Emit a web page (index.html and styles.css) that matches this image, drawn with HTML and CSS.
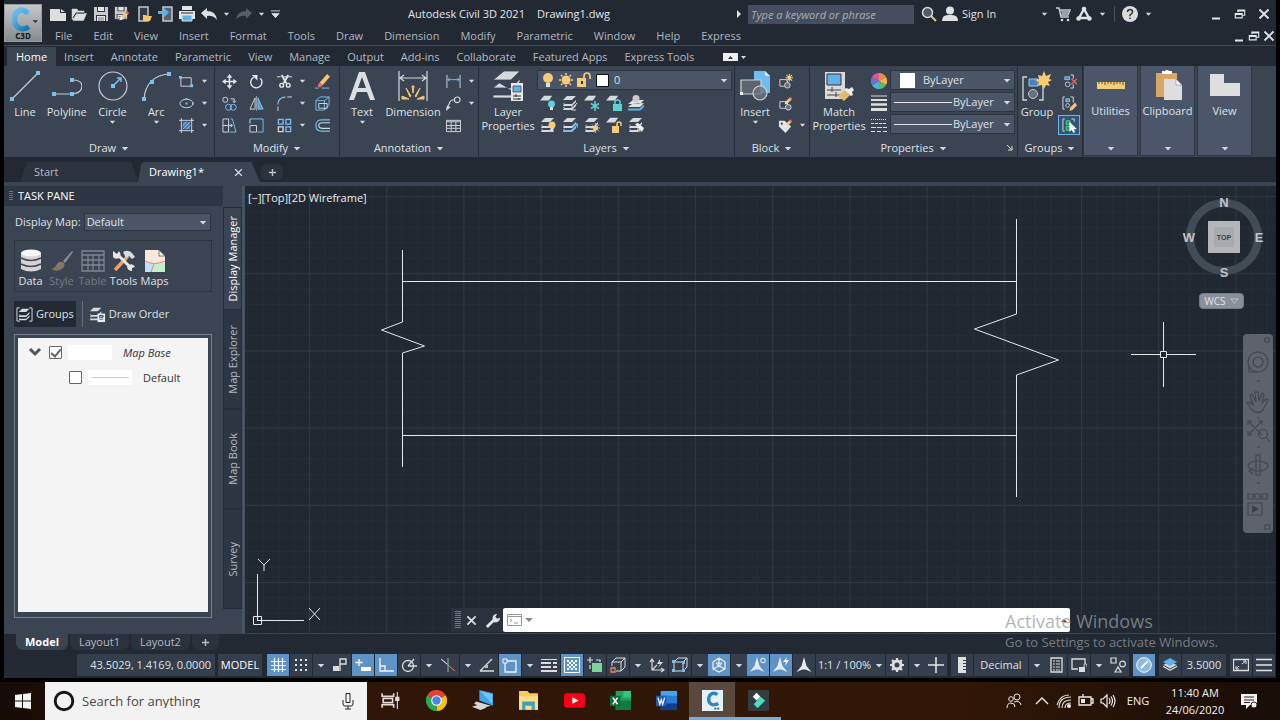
FILE: index.html
```html
<!DOCTYPE html>
<html lang="en">
<head>
<meta charset="utf-8">
<title>Autodesk Civil 3D 2021 - Drawing1.dwg</title>
<link rel="stylesheet" href="styles.css">
</head>
<body>
<svg class="defs" aria-hidden="true">
<defs>
<linearGradient id="gC" x1="0" y1="0" x2="1" y2="1"><stop offset="0" stop-color="#6cc3f0"/><stop offset="1" stop-color="#1271ad"/></linearGradient>
<symbol id="dn" viewBox="0 0 10 6"><path d="M1 1h8L5 5.500z" fill="#d5dae2"/></symbol>
<symbol id="sheets" viewBox="0 0 16 16"><path d="M5 1h9l-4 4H1zM3 7l-2 2h9l4-4v2l-4 4H1M3 11l-2 2h9l4-4v2l-4 4H1" fill="#d6d9dd"/></symbol>
<symbol id="sheet" viewBox="0 0 16 16"><path d="M5 2h10l-4 6H0z" fill="#d6d9dd"/></symbol>
<symbol id="new" viewBox="0 0 16 16"><path d="M0 3h10v4h6v8H0z" fill="#dedede"/><path d="M11 3l4 3h-4z" fill="#dedede"/></symbol>
<symbol id="open" viewBox="0 0 16 16"><path d="M1 13V3h5l1 2h6v2H5L2 14M5.500 7.500h10l-3 7H2z" fill="#dedede" stroke="#dedede" stroke-width=".5"/><path d="M2 12l3-5h8" fill="none" stroke="#222933"/></symbol>
<symbol id="save" viewBox="0 0 16 16"><path d="M1 1h14v14H1z" fill="#c9cbce"/><path d="M4 1h8v5H4zM3 9h10v6H3z" fill="#303641"/><path d="M5 1h6v4H5zM4 10h8v5H4z" fill="#e6e6e6"/><path d="M5 12h6M5 14h6" stroke="#777"/></symbol>
<symbol id="pencil" viewBox="0 0 16 16"><path d="M4 13l1-4 6-6 3 3-6 6z" fill="#f1cb7c"/><path d="M10 4l2-2 3 3-2 2z" fill="#df6660"/><path d="M3 14l2-5 3 3z" fill="#eee"/></symbol>
<symbol id="phone" viewBox="0 0 16 16"><rect x="3" y="1" width="9" height="14" fill="#353c48" stroke="#c5c8cc" stroke-width="1.500"/><path d="M7 9h3l1 1h5l-2 5H7z" fill="#f1c574"/></symbol>
<symbol id="phone2" viewBox="0 0 16 16"><rect x="5" y="1" width="9" height="14" fill="#59616e" stroke="#c5c8cc" stroke-width="1.500"/><path d="M0 5h6V2l5 4.500L6 11V8H0z" fill="#5eb0e8"/></symbol>
<symbol id="print" viewBox="0 0 16 16"><path d="M3 0h10v4H3zM0 5h16v8H0z" fill="#e4e4e4"/><path d="M3 9h10v6H3z" fill="#5eb0e8" stroke="#e4e4e4"/><path d="M2 7h12" stroke="#222933"/></symbol>
<symbol id="undo" viewBox="0 0 16 16"><path d="M0 7l6-5v3q9 0 10 9-4-5-10-4v3z" fill="#e0e0e0"/></symbol>
<symbol id="redo" viewBox="0 0 16 16"><path d="M16 7l-6-5v3Q1 5 0 14q4-5 10-4v3z" fill="#565d68"/></symbol>
<symbol id="restore" viewBox="0 0 14 14"><path d="M4.500 5V2.500h8v6H9M4.500 3.500h8M1.500 6.500h8v5h-8zM1.500 7.500h8" fill="none" stroke="#e2e4e7" stroke-width="1.300"/></symbol>
<symbol id="x" viewBox="0 0 12 12"><path d="M1.500 1.500l9 9M10.500 1.500l-9 9" stroke="#e2e4e7" stroke-width="1.800"/></symbol>
<symbol id="min" viewBox="0 0 12 12"><path d="M2 10.500h8" stroke="#e2e4e7" stroke-width="2"/></symbol>
<symbol id="an" viewBox="0 0 16 16"><path d="M8 0l2.500 9 5 6-6-2.500h-3L.5 15l5-6z" fill="#e6e9ed"/></symbol>
<symbol id="vtx" viewBox="0 0 4 4"><path d="M0 0h4v4H0z" fill="#7cc0f0"/></symbol>
</defs>
</svg>

<div class="app">
<header class="top">
  <button class="logo" aria-label="Application menu"><svg viewBox="0 0 38 38"><path d="M24 8.500Q20 5 16 5.500 10 7 10 15t7 10q4 1 8-2" fill="none" stroke="url(#gC)" stroke-width="5.500"/><path d="M8 10q4-9 11-7 4 0 8 4l-3 4q-6-5-10 0z" fill="#63bdec" opacity=".6"/><path d="M29 16h6l-3 3z" fill="#333"/></svg><span>C3D</span></button>
  <div class="bars">
    <div class="titlebar">
      <nav class="qat">
        <button aria-label="New"><svg><use href="#new"/></svg></button><button aria-label="Open"><svg><use href="#open"/></svg></button><button aria-label="Save"><svg><use href="#save"/></svg></button><button aria-label="Save as"><svg viewBox="0 0 16 16"><use href="#save" width="14" height="14"/><use href="#pencil" x="3" y="3" width="13" height="13"/></svg></button><button aria-label="Open from mobile"><svg><use href="#phone"/></svg></button><button aria-label="Save to mobile"><svg><use href="#phone2"/></svg></button><button aria-label="Plot"><svg><use href="#print"/></svg></button><button aria-label="Undo"><svg><use href="#undo"/></svg></button><button class="thin" aria-label="Undo list"><svg class="ar"><use href="#dn"/></svg></button><button aria-label="Redo"><svg><use href="#redo"/></svg></button><button class="thin" aria-label="Redo list"><svg class="ar"><use href="#dn"/></svg></button><button class="thin" aria-label="Customize"><svg viewBox="0 0 10 10" class="cz"><path d="M0 1h10M1 4h8L5 8.500z" stroke="#ddd" fill="#ddd"/></svg></button>
      </nav>
      <div class="title"><span>Autodesk Civil 3D 2021</span><span>Drawing1.dwg</span></div>
      <div class="info">
        <svg class="tri" viewBox="0 0 6 10"><path d="M1 1v8l4-4z" fill="#e2e4e7"/></svg>
        <input class="search" type="text" placeholder="Type a keyword or phrase" aria-label="Search help">
        <button aria-label="Search"><svg viewBox="0 0 16 16"><circle cx="6.500" cy="6.500" r="5" fill="#545b65" stroke="#d9dbde" stroke-width="1.500"/><path d="M10 10l5 5" stroke="#d8c9a8" stroke-width="2"/></svg></button>
        <button class="sign"><svg viewBox="0 0 16 16"><circle cx="8" cy="4.500" r="4" fill="#e0e0e0"/><path d="M0 15q0-6 6-6h4q6 0 6 6z" fill="#e0e0e0"/></svg>Sign In</button>
        <button class="thin" aria-label="Account"><svg class="ar"><use href="#dn"/></svg></button>
        <button aria-label="Store"><svg viewBox="0 0 16 16"><path d="M1 2h3l2 9h8M5 4h10l-2 5H6" fill="none" stroke="#c9ccd0" stroke-width="1.500"/><path d="M6 5h8l-1 4H7z" fill="#9a9fa7"/><circle cx="7" cy="14" r="1.300" fill="#ddd"/><circle cx="13" cy="14" r="1.300" fill="#ddd"/></svg></button>
        <button aria-label="Autodesk App Store"><svg viewBox="0 0 16 16"><path d="M8 3L3 12h10z" fill="none" stroke="#dfe1e4" stroke-width="2.400"/><circle cx="8" cy="3" r="2.300" fill="#dfe1e4"/><circle cx="2.600" cy="12.500" r="2.300" fill="#dfe1e4"/><circle cx="13.400" cy="12.500" r="2.300" fill="#dfe1e4"/></svg></button>
        <button class="thin" aria-label="App list"><svg class="ar"><use href="#dn"/></svg></button>
        <i class="vsep"></i>
        <button aria-label="Help"><svg viewBox="0 0 16 16"><circle cx="8" cy="8" r="8" fill="#dcdcdc"/><path d="M5.500 6q0-2.500 2.500-2.500T10.500 6Q10.500 7.500 8 9v1.300M8 11.500v1.500" fill="none" stroke="#333" stroke-width="1.500"/></svg></button>
        <button class="thin" aria-label="Help list"><svg class="ar"><use href="#dn"/></svg></button>
        <div class="win"><button aria-label="Minimize"><svg><use href="#min"/></svg></button><button aria-label="Restore"><svg><use href="#restore"/></svg></button><button aria-label="Close"><svg><use href="#x"/></svg></button></div>
      </div>
    </div>
    <div class="menubar">
      <nav><button>File</button><button>Edit</button><button>View</button><button>Insert</button><button>Format</button><button>Tools</button><button>Draw</button><button>Dimension</button><button>Modify</button><button>Parametric</button><button>Window</button><button>Help</button><button>Express</button></nav>
      <div class="docwin"><button aria-label="Minimize drawing"><svg><use href="#min"/></svg></button><button aria-label="Restore drawing"><svg><use href="#restore"/></svg></button><button aria-label="Close drawing"><svg><use href="#x"/></svg></button></div>
    </div>
  </div>
</header>

<nav class="rtabs"><button class="on">Home</button><button>Insert</button><button>Annotate</button><button>Parametric</button><button>View</button><button>Manage</button><button>Output</button><button>Add-ins</button><button>Collaborate</button><button>Featured Apps</button><button>Express Tools</button><button class="fold" aria-label="Minimize ribbon"><svg viewBox="0 0 24 8"><path d="M0 0h15v8H0z" fill="#eceef0"/><path d="M5 6l2.500-3L10 6z" fill="#333"/><path d="M18 3h5l-2.500 3z" fill="#d5dae2"/></svg></button></nav>

<section class="ribbon">
  <div class="panel draw">
    <div class="body">
      <button class="big"><svg viewBox="0 0 30 30"><path d="M2 28L28 2" stroke="#c7cbd1" stroke-width="1.200"/><use href="#vtx" x="0" y="26" width="4" height="4"/><use href="#vtx" x="26" y="0" width="4" height="4"/></svg>Line</button>
      <button class="big"><svg viewBox="0 0 30 30"><path d="M1 23h19q10-1 10-8 0-6-10-6" fill="none" stroke="#c7cbd1" stroke-width="1.200"/><use href="#vtx" x="0" y="21" width="4" height="4"/><use href="#vtx" x="18" y="21" width="4" height="4"/><use href="#vtx" x="18" y="7" width="4" height="4"/></svg>Polyline</button>
      <button class="big"><svg viewBox="0 0 30 30"><circle cx="15" cy="15" r="14" fill="none" stroke="#c7cbd1" stroke-width="1.200"/><path d="M15 15l8-8M19 7h4v4" fill="none" stroke="#7cc0f0" stroke-width="1.500"/><use href="#vtx" x="13" y="13" width="4" height="4"/></svg>Circle<svg class="ar"><use href="#dn"/></svg></button>
      <button class="big"><svg viewBox="0 0 30 30"><path d="M3 28Q5 5 28 3" fill="none" stroke="#c7cbd1" stroke-width="1.200"/><use href="#vtx" x="1" y="26" width="4" height="4"/><use href="#vtx" x="9" y="9" width="4" height="4"/><use href="#vtx" x="26" y="1" width="4" height="4"/></svg>Arc<svg class="ar"><use href="#dn"/></svg></button>
      <div class="small two">
        <button aria-label="Rectangle"><svg viewBox="0 0 16 16"><path d="M2 4h11v9H2z" fill="none" stroke="#d5d8dc"/><path d="M0 2h3v3H0zM12 11h3v3h-3z" fill="#7cc0f0"/></svg></button><svg class="ar"><use href="#dn"/></svg>
        <button aria-label="Ellipse"><svg viewBox="0 0 16 16"><ellipse cx="8" cy="8" rx="7" ry="4.500" fill="none" stroke="#d5d8dc"/><path d="M7 7h2v2H7zM7 2h2v2H7zM14 7h2v2h-2z" fill="#7cc0f0"/></svg></button><svg class="ar"><use href="#dn"/></svg>
        <button aria-label="Hatch"><svg viewBox="0 0 16 16"><path d="M4 4h8v8H4z" fill="#4c7da8"/><path d="M2.500 0v16M13.500 0v16M0 2.500h16M0 13.500h16" stroke="#d5d8dc"/><path d="M4 8l4-4M4 12l8-8M8 12l4-4" stroke="#8cc8f4"/></svg></button><svg class="ar"><use href="#dn"/></svg>
      </div>
    </div>
    <button class="ptitle">Draw<svg class="ar"><use href="#dn"/></svg></button>
  </div>
  <div class="panel modify">
    <div class="body">
      <div class="small five">
        <button aria-label="Move"><svg viewBox="0 0 16 16"><path d="M8 2v12M2 8h12" stroke="#e4e6e9" stroke-width="1.600"/><path d="M8 0l3 4H5zM8 16l3-4H5zM0 8l4-3v6zM16 8l-4-3v6z" fill="#e4e6e9"/></svg></button>
        <button aria-label="Rotate"><svg viewBox="0 0 16 16"><path d="M5 3.500a6 6 0 1 0 7 1" fill="none" stroke="#e4e6e9" stroke-width="1.500"/><path d="M3 1h6v6z" fill="#e4e6e9"/></svg></button>
        <button aria-label="Trim"><svg viewBox="0 0 16 16"><path d="M0 3h4M7 3h9" stroke="#e4e6e9"/><path d="M5 1l5 9M12 1L7 10" stroke="#e4e6e9" stroke-width="2"/><circle cx="5" cy="12" r="2" fill="none" stroke="#e4e6e9" stroke-width="1.500"/><circle cx="12" cy="12" r="2" fill="none" stroke="#e4e6e9" stroke-width="1.500"/></svg></button><svg class="ar"><use href="#dn"/></svg>
        <button aria-label="Erase"><svg viewBox="0 0 16 16"><path d="M5 9l8-9 3 3-8 9z" fill="#f1c574"/><path d="M5 9l3 3-2 2q-3 1-3-2z" fill="#e8706e"/><path d="M0 15h4M7 15h8" stroke="#7cc0f0"/></svg></button>
        <button aria-label="Copy"><svg viewBox="0 0 16 16"><circle cx="3.500" cy="4" r="2.700" fill="none" stroke="#d5d8dc"/><path d="M9 3h4v4M11 5l2 2 2-2" fill="none" stroke="#d5d8dc"/><circle cx="7" cy="12" r="3.200" fill="none" stroke="#7cc0f0"/><circle cx="12" cy="12" r="3.200" fill="none" stroke="#7cc0f0"/></svg></button>
        <button aria-label="Mirror"><svg viewBox="0 0 16 16"><path d="M6.500 2v12H1z" fill="none" stroke="#d5d8dc"/><path d="M9.500 2v12H15z" fill="#5a9cd0" stroke="#7cc0f0"/><path d="M8 0v16" stroke="#d5d8dc" stroke-width=".6"/></svg></button>
        <button aria-label="Fillet"><svg viewBox="0 0 16 16"><path d="M1 16v-5M11 1h5" stroke="#d5d8dc"/><path d="M1 9q0-7 8-8" fill="none" stroke="#7cc0f0" stroke-width="1.300"/></svg></button><svg class="ar"><use href="#dn"/></svg>
        <button aria-label="Explode"><svg viewBox="0 0 16 16"><path d="M1 5h9v10H1zM1 5l4-4h10l-5 4M15 1v9l-5 5" fill="none" stroke="#7cc0f0"/><path d="M4 8h9v5H4z" fill="none" stroke="#d5d8dc"/></svg></button>
        <button aria-label="Stretch"><svg viewBox="0 0 16 16"><path d="M1 1h6v14H1zM1 8h10M9 6l2 2-2 2" fill="none" stroke="#d5d8dc"/><path d="M9 1h2l4 14H8" fill="none" stroke="#7cc0f0"/></svg></button>
        <button aria-label="Scale"><svg viewBox="0 0 16 16"><path d="M1 1h14v14H9" fill="none" stroke="#7cc0f0"/><path d="M1 1v5M1 8h7v7H1z" fill="none" stroke="#d5d8dc"/></svg></button>
        <button aria-label="Array"><svg viewBox="0 0 16 16"><path d="M1.500 9.500h5v5h-5z" fill="none" stroke="#d5d8dc" stroke-width="1.400"/><path d="M1.500 1.500h5v5h-5zM9.500 1.500h5v5h-5zM9.500 9.500h5v5h-5z" fill="none" stroke="#7cc0f0" stroke-width="1.400"/></svg></button><svg class="ar"><use href="#dn"/></svg>
        <button aria-label="Offset"><svg viewBox="0 0 16 16"><path d="M16 2H7Q1 2 1 8t6 6h9" fill="none" stroke="#7cc0f0" stroke-width="1.200"/><path d="M16 5H8Q4 5 4 8t4 3h8" fill="none" stroke="#d5d8dc" stroke-width="1.200"/></svg></button>
      </div>
    </div>
    <button class="ptitle">Modify<svg class="ar"><use href="#dn"/></svg></button>
  </div>
  <div class="panel anno">
    <div class="body">
      <button class="big"><svg viewBox="0 0 30 30"><path fill-rule="evenodd" d="M12 1h6l10 28h-5l-3-8H10l-3 8H2zM15 6l-4 11h8z" fill="#dcdee1"/></svg>Text<svg class="ar"><use href="#dn"/></svg></button>
      <button class="big"><svg viewBox="0 0 30 30"><path d="M1 0v30M29 0v30M2 7h26M6 4L2 7l4 3M24 4l4 3-4 3" fill="none" stroke="#d5d8dc" stroke-width="1.200"/><path d="M4 25l7 3H4zM8 17l5 8-1 1zM14 15h2l-1 7zM22 17l-5 8 1 1zM26 25l-7 3h7z" fill="#f1c574" stroke="#f1c574"/></svg>Dimension</button>
      <div class="small two">
        <button aria-label="Linear"><svg viewBox="0 0 16 16"><path d="M1 1v14M15 1v14" stroke="#d5d8dc"/><path d="M2 6h12M4 4L2 6l2 2M12 4l2 2-2 2" fill="none" stroke="#7cc0f0"/></svg></button><svg class="ar"><use href="#dn"/></svg>
        <button aria-label="Leader"><svg viewBox="0 0 16 16"><circle cx="12" cy="4" r="3" fill="none" stroke="#d5d8dc" stroke-width="1.200"/><path d="M9 4Q5 4 4 7l-3 6" fill="none" stroke="#d5d8dc" stroke-width="1.200"/><path d="M0 16l1-6 4 2z" fill="#d5d8dc"/></svg></button><svg class="ar"><use href="#dn"/></svg>
        <button aria-label="Table"><svg viewBox="0 0 16 16"><path d="M.5 2.500h15v12H.5zM0 4h16M0 8h16M0 11h16M5.500 4v10M10.500 4v10" fill="none" stroke="#d5d8dc"/></svg></button>
      </div>
    </div>
    <button class="ptitle">Annotation<svg class="ar"><use href="#dn"/></svg></button>
  </div>
  <div class="panel layers">
    <div class="body">
      <button class="big"><svg viewBox="0 0 30 30"><path d="M11 0h16l-9 9H0zM6 12l-6 5h18l9-9v3l-9 8M6 19l-6 5h18l9-9v3l-9 9H0v-3" fill="#d6d9dd" stroke="#39424f" stroke-width=".8"/><path d="M18 12h12v18H18z" fill="#e8e8e8"/><path d="M20 15h8v6h-8z" fill="#62b2ea" stroke="#333" stroke-width=".7"/><path d="M20 25h8M20 28h8M23 23v3M26 27v2" stroke="#333"/></svg>Layer<br>Properties</button>
      <div class="laycol">
        <div class="combo layersel"><select aria-label="Layer"><option>0</option></select><svg class="over" viewBox="0 0 68 16"><circle cx="7" cy="6" r="5" fill="#f6cb79"/><path d="M5 11h4v4H5z" fill="#e1e1e1"/><circle cx="25" cy="8" r="4.500" fill="#f6cb79"/><path d="M25 1v2M25 13v2M18 8h2M30 8h2M20 3l1.500 1.500M28.500 11.500L30 13M30 3l-1.500 1.500M21.500 11.500L20 13" stroke="#f6cb79" stroke-width="1.500"/><path d="M43 7V4q0-3 3-3t3 3v3" fill="none" stroke="#f6cb79" stroke-width="1.700"/><path d="M36 6h9v9h-9z" fill="#f6cb79"/><path d="M40 9h2v3h-2z" fill="#333"/><path d="M55.500 2.500h12v12h-12z" fill="#fff" stroke="#111"/></svg><svg class="ar"><use href="#dn"/></svg></div>
        <div class="laygrid">
          <button aria-label="Off"><svg viewBox="0 0 16 16"><use href="#sheet" y="-1" width="13" height="13"/><circle cx="11.500" cy="9" r="3.500" fill="#5fd0d4"/><path d="M10 12h3v3h-3z" fill="#ddd"/></svg></button>
          <button aria-label="Isolate"><svg viewBox="0 0 16 16"><use href="#sheets"/><path d="M15 8l-5 6M10 11v4h4" stroke="#d5d8dc" fill="none"/></svg></button>
          <button aria-label="Freeze"><svg viewBox="0 0 16 16"><use href="#sheet" y="-1" width="13" height="13"/><path d="M11 6v10M7 8.500l8 5M15 8.500l-8 5" stroke="#5fd0d4" stroke-width="1.500"/></svg></button>
          <button aria-label="Lock"><svg viewBox="0 0 16 16"><use href="#sheet" y="-1" width="13" height="13"/><path d="M7 9h9v7H7z" fill="#5fd0d4"/><path d="M9 9V7q0-2 2.500-2T14 7v2" fill="none" stroke="#5fd0d4" stroke-width="1.500"/></svg></button>
          <button aria-label="Make current"><svg viewBox="0 0 16 16"><path d="M5 5h11l-4 4H0zM4 9l-4 3h12l4-4" fill="#e1e1e1"/><path d="M0 14.500h12l4-4" fill="none" stroke="#62b2ea" stroke-width="2"/><circle cx="8" cy="3.500" r="3.500" fill="#c9cacc"/></svg></button>
          <button aria-label="Turn all on"><svg viewBox="0 0 16 16"><use href="#sheets"/><circle cx="12" cy="8" r="3.500" fill="#f6cb79"/><path d="M10.500 11h3v4h-3z" fill="#ddd"/></svg></button>
          <button aria-label="Unisolate"><svg viewBox="0 0 16 16"><use href="#sheets"/><path d="M1 14h8l6-6M12 7h4v4" stroke="#62b2ea" stroke-width="1.500" fill="none"/></svg></button>
          <button aria-label="Thaw all"><svg viewBox="0 0 16 16"><use href="#sheets"/><circle cx="11.500" cy="11" r="2.500" fill="#f6cb79"/><path d="M11.500 6v10M6.500 11h10M8 7.500l7 7M15 7.500l-7 7" stroke="#f6cb79" stroke-width=".8"/></svg></button>
          <button aria-label="Unlock"><svg viewBox="0 0 16 16"><use href="#sheet" y="-1" width="13" height="13"/><path d="M6 9h7v7H6z" fill="#f6cb79"/><path d="M11 9V7q0-2 2-2t2 2v2" fill="none" stroke="#f6cb79" stroke-width="1.500"/></svg></button>
          <button aria-label="Match layer"><svg viewBox="0 0 16 16"><use href="#sheets"/><path d="M7 7l3-1 6 5-2 4-4-4z" fill="#ececec"/><path d="M9 11l4 4-4-1z" fill="#f1c574"/></svg></button>
        </div>
      </div>
    </div>
    <button class="ptitle">Layers<svg class="ar"><use href="#dn"/></svg></button>
  </div>
  <div class="panel block">
    <div class="body">
      <button class="big"><svg viewBox="0 0 30 30"><path d="M14 0h11l5 5v17H14z" fill="#6fbdf0"/><path d="M25 0v5h5" fill="#d7ecfa"/><path d="M1 9h20v14H1z" fill="#5c6470" stroke="#cfd2d6" stroke-width="1.200"/><circle cx="20" cy="22" r="7" fill="#6c7480" fill-opacity=".8" stroke="#cfd2d6" stroke-width="1.200"/><path d="M0 21h3v3H0z" fill="#e8e8e8"/></svg>Insert<svg class="ar"><use href="#dn"/></svg></button>
      <div class="small two">
        <button aria-label="Create block"><svg viewBox="0 0 16 16"><path d="M2 6h8v7H2z" fill="none" stroke="#d5d8dc"/><circle cx="10" cy="12" r="3" fill="#666e7a" stroke="#d5d8dc"/><path d="M12 0v8M8 4h8M9 1l6 6M15 1L9 7" stroke="#f6cb79" stroke-width="1.200"/></svg></button><i></i>
        <button aria-label="Edit block"><svg viewBox="0 0 16 16"><path d="M2 6h8v7H2z" fill="none" stroke="#d5d8dc"/><circle cx="11" cy="12" r="3" fill="#666e7a" stroke="#d5d8dc"/><use href="#pencil" x="5" y="-1" width="11" height="12"/></svg></button><i></i>
        <button aria-label="Edit attributes"><svg viewBox="0 0 16 16"><path d="M1 3h6l7 6-6 7-7-7z" fill="#e4e4e4"/><circle cx="4" cy="6" r="1.200" fill="#39424f"/><use href="#pencil" x="5" y="0" width="11" height="11"/></svg></button><svg class="ar"><use href="#dn"/></svg>
      </div>
    </div>
    <button class="ptitle">Block<svg class="ar"><use href="#dn"/></svg></button>
  </div>
  <div class="panel props">
    <div class="body">
      <button class="big"><svg viewBox="0 0 30 30"><path d="M1 1h20v27H1z" fill="#dadada"/><path d="M3 3h14v11H3z" fill="#62b2ea" stroke="#333"/><path d="M3 19h14M3 24h14M8 16v5M12 21v5" stroke="#444"/><path d="M14 25l6-6 6 5-6 6z" fill="#e8b968"/><path d="M20 19l2-2 3 1 3-2 2 3-2 2 1 3-2 1z" fill="#eee"/></svg>Match<br>Properties</button>
      <div class="proprows">
        <button class="pi" aria-label="Color"><svg viewBox="0 0 16 16"><path d="M8 8V0a8 8 0 0 1 7 4z" fill="#f08a4b"/><path d="M8 8l7-4a8 8 0 0 1 0 8z" fill="#f0b24a"/><path d="M8 8l7 4a8 8 0 0 1-7 4z" fill="#58b96b"/><path d="M8 8v8a8 8 0 0 1-7-4z" fill="#4ab7d8"/><path d="M8 8l-7 4a8 8 0 0 1 0-8z" fill="#6d6fd6"/><path d="M8 8L1 4a8 8 0 0 1 7-4z" fill="#e0568f"/></svg></button>
        <div class="combo"><select class="c1" aria-label="Object color"><option>ByLayer</option></select><i class="swatch"></i><svg class="ar"><use href="#dn"/></svg></div>
        <button class="pi" aria-label="Lineweight list"><svg viewBox="0 0 16 16"><path d="M0 1h16" stroke="#ddd"/><path d="M0 5h16" stroke="#ddd" stroke-width="2"/><path d="M0 9.500h16" stroke="#ddd" stroke-width="2.500"/><path d="M0 14.500h16" stroke="#ddd" stroke-width="3"/></svg></button>
        <div class="combo"><select class="c2" aria-label="Lineweight"><option>ByLayer</option></select><i class="rule"></i><svg class="ar"><use href="#dn"/></svg></div>
        <button class="pi" aria-label="Linetype list"><svg viewBox="0 0 16 16"><path d="M0 2.500h16" stroke="#ddd" stroke-dasharray="1 1"/><path d="M0 6.500h16" stroke="#ddd" stroke-dasharray="3 1"/><path d="M0 10.500h16" stroke="#ddd" stroke-dasharray="5 1"/><path d="M0 14.500h16" stroke="#ddd" stroke-dasharray="4 2"/></svg></button>
        <div class="combo"><select class="c2" aria-label="Linetype"><option>ByLayer</option></select><i class="rule"></i><svg class="ar"><use href="#dn"/></svg></div>
      </div>
    </div>
    <div class="pfoot"><button class="ptitle">Properties<svg class="ar"><use href="#dn"/></svg></button><button class="launch" aria-label="Properties palette"><svg viewBox="0 0 6 6"><path d="M0 0l5 5M5 1v4H1" stroke="#ddd" fill="none"/></svg></button></div>
  </div>
  <div class="panel groups">
    <div class="body">
      <button class="big"><svg viewBox="0 0 30 30"><path d="M5 6H1v23h4M17 29h4V14" fill="none" stroke="#d5d8dc" stroke-width="1.300"/><path d="M7 8h9v7H7z" fill="#4384bd" stroke="#8cc8f4"/><circle cx="11" cy="23" r="4.500" fill="#69717c" stroke="#c5c8cc"/><path d="M22 0l2 5 5-2-2 5 3 1-4 2 2 4-4-1-2 4-2-4-4 1 1-4-4-2 4-1-1-4 4 1z" fill="#f9cc74"/></svg>Group</button>
      <div class="small one">
        <button aria-label="Ungroup"><svg viewBox="0 0 16 16"><path d="M3 3h5v3H3z" fill="#4384bd" stroke="#8cc8f4"/><circle cx="6" cy="11" r="2.500" fill="none" stroke="#ccc"/><path d="M9 1h3v4M12 11v4H9" fill="none" stroke="#ddd"/><path d="M10 5l6 6M16 5l-6 6" stroke="#e5646c" stroke-width="1.500"/></svg></button>
        <button aria-label="Group edit"><svg viewBox="0 0 16 16"><path d="M3 1H1v13h2M9 1h3v6" fill="none" stroke="#ddd"/><path d="M4 3h4v3H4z" fill="#4384bd" stroke="#8cc8f4"/><circle cx="6" cy="10" r="2" fill="none" stroke="#ccc"/><path d="M8 16l1-4 5-5 2 3-5 5z" fill="#f1c574"/></svg></button>
        <button class="picked" aria-label="Group selection"><svg viewBox="0 0 16 16"><path d="M3 1H1v13h2M10 1h3v3" fill="none" stroke="#ddd"/><path d="M4.500 3h4v4h-4zM4.500 9h4v4h-4z" fill="#2f8a58" stroke="#5bd793"/><path d="M8 4v11l2.500-2.500L12 16l2-1-1.500-3H16z" fill="#fff"/></svg></button>
      </div>
    </div>
    <button class="ptitle">Groups<svg class="ar"><use href="#dn"/></svg></button>
  </div>
  <button class="collapsed"><svg viewBox="0 0 30 30"><path d="M1 12h28v7H1z" fill="#f3cd7c"/><path d="M3 12v2M6 12v2M9 12v3M12 12v2M15 12v2M18 12v3M21 12v2M24 12v2M27 12v3" stroke="#6b5325"/></svg>Utilities<svg class="ar"><use href="#dn"/></svg></button>
  <button class="collapsed"><svg viewBox="0 0 30 30"><path d="M3 3h21v24H3z" fill="#d8a768"/><path d="M9 1h3q2-3 4 0h3v3H9z" fill="#fff"/><path d="M11 9h12l6 6v15H11z" fill="#dedede"/><path d="M23 9v6h6z" fill="#fff" stroke="#777" stroke-width=".5"/></svg>Clipboard<svg class="ar"><use href="#dn"/></svg></button>
  <button class="collapsed"><svg viewBox="0 0 30 30"><path d="M0 4h14v9h16v13H0z" fill="#dedede"/></svg>View<svg class="ar"><use href="#dn"/></svg></button>
</section>

<nav class="doctabs"><button>Start</button><button class="on">Drawing1*<svg><use href="#x"/></svg></button><button class="add" aria-label="New drawing"><svg viewBox="0 0 10 10"><path d="M5 1v8M1 5h8" stroke="#b9bec6" stroke-width="1.600"/></svg></button></nav>

<main class="work">
  <aside class="pane">
    <h2><svg viewBox="0 0 4 10"><path d="M1 0v10M3 0v10" stroke="#aab" stroke-dasharray="1 1"/></svg>TASK PANE</h2>
    <div class="maprow"><label for="dm">Display Map:</label><div class="combo"><select id="dm"><option>Default</option></select><svg class="ar"><use href="#dn"/></svg></div></div>
    <div class="tools">
      <button><svg viewBox="0 0 24 24"><path d="M2 4v16q10 5 20 0V4z" fill="#d4d4d4"/><ellipse cx="12" cy="4" rx="10" ry="3.500" fill="#f6f6f6"/><path d="M2 9q10 5 20 0M2 15q10 5 20 0" fill="none" stroke="#444b57" stroke-width="1.500"/></svg>Data</button>
      <button disabled><svg viewBox="0 0 24 24"><path d="M13 12l9-10 1 1-8 11z" fill="#8a8d93"/><path d="M1 20q4-1 6-5 3-4 7-1 2 4-4 7-5 2-8-1z" fill="#87765f"/></svg>Style</button>
      <button disabled><svg viewBox="0 0 24 24"><path d="M1 2h22v20H1zM1 6h22M1 11h22M1 16h22M7 6v16M12 6v16M18 6v16" fill="none" stroke="#7e8590" stroke-width="1.300"/></svg>Table</button>
      <button><svg viewBox="0 0 24 24"><path d="M3 21L16 7" stroke="#e8a469" stroke-width="3.500"/><path d="M11 3q5-3 9 1l3 4-3 2-3-3-3 2z" fill="#dcdcdc"/><path d="M6 6l13 13" stroke="#e6e6e6" stroke-width="3"/><path d="M1 2l4 3 2-3q3 4 0 7-4 2-6-1zM17 16q4-2 6 2l-3 1v3q-4 0-5-4z" fill="#e6e6e6"/></svg>Tools</button>
      <button><svg viewBox="0 0 24 24"><path d="M2 1h14l6 6v16H2z" fill="#fbe7dc"/><path d="M2 13l9 2-3 8H2z" fill="#bfe0fb"/><path d="M11 15l11-1v9H8z" fill="#c2efc7"/><path d="M2 12q9 5 20 0M11 15l-3 8" fill="none" stroke="#dd8080"/><path d="M16 1l6 6h-6z" fill="#fff" stroke="#555" stroke-width=".8"/></svg>Maps</button>
    </div>
    <div class="modes"><button class="on"><svg viewBox="0 0 18 18"><path d="M4 2H1v14h3M14 2h3v14h-3" fill="none" stroke="#ddd"/><use href="#sheets" x="2" y="2" width="14" height="14"/></svg>Groups</button><button><svg viewBox="0 0 18 18"><use href="#sheets" y="1" width="15" height="15"/><path d="M9 8h8v9H9z" fill="#eee"/><path d="M11 10h4v2h-4zM11 14h4" fill="#62b2ea" stroke="#333" stroke-width=".8"/></svg>Draw Order</button></div>
    <div class="tree"><div class="leafs">
      <div class="row"><svg class="chev" viewBox="0 0 14 10"><path d="M2 1l5 5 5-5" fill="none" stroke="#555" stroke-width="3"/></svg><input type="checkbox" id="mb" checked><i class="chip"></i><label for="mb"><em>Map Base</em></label></div>
      <div class="row sub"><input type="checkbox" id="df"><i class="chip line"></i><label for="df">Default</label></div>
    </div></div>
  </aside>
  <nav class="vtabs"><button class="on"><span>Display Manager</span></button><button><span>Map Explorer</span></button><button><span>Map Book</span></button><button><span>Survey</span></button></nav>
  <section class="canvas">
    <svg class="sheetview" aria-label="Drawing">
      <defs><pattern id="minor" x="64" y="10" width="15.440" height="15.440" patternUnits="userSpaceOnUse"><path d="M.5 0v15.440M0 .5h15.440" stroke="#242d37"/></pattern>
      <pattern id="major" x="64" y="10" width="77.200" height="77.200" patternUnits="userSpaceOnUse"><path d="M.5 0v77.200M0 .5h77.200" stroke="#2e3742"/></pattern></defs>
      <rect width="100%" height="100%" fill="url(#minor)"/><rect width="100%" height="100%" fill="url(#major)"/>
      <g fill="none" stroke="#e6e9ec" stroke-width="1">
        <path d="M157.500 64v72l-21 8 43 16-22 7v114M157.500 95.500h614M157.500 249.500h614M771.500 33v95l-42 15 84 31-42 15v122"/>
        <path d="M918.500 136v30M918.500 172v29M886 168.500h29M921 168.500h30M915.500 165.500h6v6h-6z"/>
        <path d="M12.500 388v47M12 434.500h47M8.500 430.500h8v8h-8zM13 373l6 6 6-6M19 379v6M64 422l11 12M75 422l-11 12"/>
      </g>
    </svg>
    <div class="vpc">[−][Top][2D Wireframe]</div>
    <div class="cube"><svg viewBox="0 0 84 84"><circle cx="42" cy="42" r="34" fill="none" stroke="#434b57" stroke-width="8"/><path d="M26 26h32v32H26z" fill="#b4b6b8"/><path d="M32 32h20v20H32z" fill="#a7abb0"/><g fill="#bfc3c9" font-family="Liberation Sans, sans-serif" font-weight="700" font-size="13" text-anchor="middle"><text x="42" y="12">N</text><text x="42" y="82">S</text><text x="7" y="47">W</text><text x="77" y="47">E</text></g><text x="42" y="45" fill="#3c4147" font-family="Liberation Sans, sans-serif" font-weight="700" font-size="7" text-anchor="middle">TOP</text></svg>
      <button>WCS<svg viewBox="0 0 10 8"><path d="M1 1h8L5 6z" fill="none" stroke="#c5c7d0"/></svg></button></div>
    <div class="navbar"><svg viewBox="0 0 30 198"><g fill="none" stroke="#41474f" stroke-width="1.200"><circle cx="24" cy="6" r="2.500"/><circle cx="15" cy="28" r="10"/><circle cx="15" cy="28" r="5"/><path d="M6 32v6h8M14 47h3"/><path d="M9 76l-5-7 2-1 4 3-3-10 2-1 4 8-1-10h3l1 9 3-8 2 1-2 9 4-4 2 1-5 10q-5 5-11 0zM14 84h3"/><path d="M5 87l14 14M19 87L5 101M5 91v-4h4M15 87h4v4M5 97v4h4"/><circle cx="20" cy="100" r="4.500"/><path d="M23 103l4 5M14 113h3"/><path d="M13 121h4v20h-4z"/><ellipse cx="15" cy="132" rx="10" ry="5"/><path d="M10 134l-4 3 4 3M14 149h3M5 160h5v5H5zM12 160h5v5h-5zM19 160h5v5h-5zM5 169h14v12H5zM22 191h5v4h-5z"/></g><path d="M9 171l7 4-7 4z" fill="#3a404a"/></svg></div>
    <div class="cmd"><svg class="grip" viewBox="0 0 6 18"><path d="M1 0v18M3 0v18M5 0v18" stroke="#bbb" stroke-dasharray="1 1"/></svg><button aria-label="Close command line"><svg><use href="#x"/></svg></button><button aria-label="Customize command line"><svg viewBox="0 0 16 16"><path d="M2 15l8-8" stroke="#e2e4e7" stroke-width="3"/><path d="M8 6q0-5 5-5l-2 3 2 2 3-1q0 5-6 5z" fill="#e2e4e7"/></svg></button><div class="field"><svg viewBox="0 0 28 12"><path d="M.5.5h14v11H.5zM1 2.500h13M3 5l2 1.500L3 8M7 9h4" fill="none" stroke="#999"/><path d="M18 4h8l-4 4z" fill="#888"/></svg><input type="text" aria-label="Command"><svg class="up" viewBox="0 0 8 5"><path d="M1 4l3-3 3 3z" fill="#444"/></svg></div></div>
    <div class="activate"><strong>Activate Windows</strong><span>Go to Settings to activate Windows.</span></div>
  </section>
</main>

<nav class="laytabs"><button class="on">Model</button><button>Layout1</button><button>Layout2</button><button class="add" aria-label="New layout"><svg viewBox="0 0 10 10"><path d="M5 1v8M1 5h8" stroke="#b9bec6" stroke-width="1.600"/></svg></button></nav>

<footer class="status">
  <output class="coords">43.5029, 1.4169, 0.0000</output>
  <button class="txt model">MODEL</button>
  <button class="on" aria-label="Grid"><svg viewBox="0 0 16 16"><path d="M4.500 1v14M8.500 1v14M12.500 1v14M1 4.500h15M1 8.500h15M1 12.500h15" stroke="#f1f5f9" stroke-width="1.200"/></svg></button>
  <button aria-label="Snap"><svg viewBox="0 0 16 16"><path d="M3 2v14M8 2v14M13 2v14" stroke="#e2e4e7" stroke-width="2" stroke-dasharray="2 3"/></svg></button>
  <button class="a" aria-label="Snap options"><svg class="ar"><use href="#dn"/></svg></button>
  <button aria-label="Infer constraints"><svg viewBox="0 0 16 16"><path d="M1 9h6v5H1z" fill="#ddd"/><path d="M8 14V2h6v5H8" fill="none" stroke="#ddd" stroke-width="1.400"/></svg></button>
  <button class="on" aria-label="Dynamic input"><svg viewBox="0 0 16 16"><path d="M4 2v7M.5 5.500h7" stroke="#fff" stroke-width="1.300"/><path d="M6 10h10v4H6z" fill="#fff"/></svg></button>
  <button class="on" aria-label="Ortho"><svg viewBox="0 0 16 16"><path d="M2 1v13h14M2 9h5v5" fill="none" stroke="#f1f5f9" stroke-width="1.300"/></svg></button>
  <button aria-label="Polar"><svg viewBox="0 0 16 16"><circle cx="7" cy="9" r="5.500" fill="none" stroke="#ddd" stroke-width="1.300"/><path d="M7 9h9M7 9l6-7" stroke="#ddd" stroke-width="1.300"/></svg></button>
  <button class="a" aria-label="Polar options"><svg class="ar"><use href="#dn"/></svg></button>
  <button aria-label="Isodraft"><svg viewBox="0 0 16 16"><path d="M8 1v14" stroke="#81c885"/><path d="M1 2l14 12" stroke="#dc7777"/><path d="M1 2l6 5" stroke="#ddd"/></svg></button>
  <button class="a" aria-label="Isodraft options"><svg class="ar"><use href="#dn"/></svg></button>
  <button aria-label="Tracking"><svg viewBox="0 0 16 16"><path d="M1 14L13 2M1 14h14" stroke="#ddd" stroke-width="1.300"/><path d="M6 8h3v3H6z" fill="#8cc8f4"/></svg></button>
  <button class="on" aria-label="Object snap"><svg viewBox="0 0 16 16"><path d="M3 4h11v11H3z" fill="none" stroke="#f1f5f9" stroke-width="1.300"/><path d="M1 2h4v4H1z" fill="#5f93c6" stroke="#f1f5f9"/></svg></button>
  <button class="a" aria-label="Object snap options"><svg class="ar"><use href="#dn"/></svg></button>
  <button aria-label="Lineweight display"><svg viewBox="0 0 16 16"><path d="M0 2.500h16" stroke="#ddd"/><path d="M0 6h10M0 10h10M12 6h4M12 10h4M0 14h16" stroke="#ddd" stroke-width="2"/></svg></button>
  <button class="on" aria-label="Transparency"><svg viewBox="0 0 16 16"><path d="M.5.5h15v15H.5z" fill="none" stroke="#fff"/><path d="M3 4h10M3 8h10M3 12h10" stroke="#fff" stroke-width="2" stroke-dasharray="2 2"/><path d="M5 6h8M5 10h8" stroke="#fff" stroke-width="2" stroke-dasharray="2 2"/></svg></button>
  <button aria-label="Selection cycling"><svg viewBox="0 0 16 16"><path d="M5 6h10v9H5z" fill="#7bd49a"/><path d="M3 0v6M0 3h6M9 3h4v2M3 8v4" stroke="#ddd" fill="none" stroke-width="1.200"/></svg></button>
  <button aria-label="3D object snap"><svg viewBox="0 0 16 16"><path d="M2 9V5l4-4h9v9l-4 4H6M2 5h9v9M11 5l4-4" fill="none" stroke="#ddd"/><path d="M1 11h4v4H1z" fill="none" stroke="#e48a6d" stroke-width="1.300"/></svg></button>
  <button class="a" aria-label="3D snap options"><svg class="ar"><use href="#dn"/></svg></button>
  <button aria-label="Dynamic UCS"><svg viewBox="0 0 16 16"><path d="M3 2v11h12M1 5l2-3 2 3M12 11l3 2-3 2M3 13l5-5" fill="none" stroke="#ddd" stroke-width="1.200"/><path d="M11 2L8 7h3l-2 4 5-6h-3z" fill="#ddd"/></svg></button>
  <button aria-label="Selection filter"><svg viewBox="0 0 16 16"><path d="M2 5h9v9H2zM2 5l4-4h9l-4 4M15 1v9l-4 4" fill="none" stroke="#d5dde5"/><path d="M0 3h3v3H0zM0 12h3v3H0zM10 4h3v3h-3zM10 12h3v3h-3z" fill="#78bbed"/></svg></button>
  <button class="a" aria-label="Filter options"><svg class="ar"><use href="#dn"/></svg></button>
  <button class="on" aria-label="Gizmo"><svg viewBox="0 0 16 16"><path d="M8 1l6 4v7l-6 3-6-3V5zM8 1v8l6 3M8 9l-6 3" fill="none" stroke="#f1f5f9" stroke-width="1.200"/><path d="M5 6h6L8 10z" fill="none" stroke="#f1f5f9"/></svg></button>
  <button class="a" aria-label="Gizmo options"><svg class="ar"><use href="#dn"/></svg></button>
  <button class="on" aria-label="Annotation visibility"><svg viewBox="0 0 16 16"><use href="#an" x="-1" /><circle cx="13" cy="3.500" r="2.300" fill="#5f93c6" stroke="#fff"/></svg></button>
  <button class="on" aria-label="AutoScale"><svg viewBox="0 0 16 16"><use href="#an" x="-1"/><path d="M14 0l-4 5h3l-1 4 4-6h-3z" fill="#fff"/></svg></button>
  <button aria-label="Annotation scale"><svg><use href="#an"/></svg></button>
  <button class="txt scale">1:1 / 100%<svg class="ar"><use href="#dn"/></svg></button>
  <button aria-label="Workspace"><svg viewBox="0 0 16 16"><circle cx="8" cy="8" r="4" fill="none" stroke="#ddd" stroke-width="3"/><path d="M8 1v3M8 12v3M1 8h3M12 8h3M3 3l2 2M11 11l2 2M13 3l-2 2M5 11l-2 2" stroke="#ddd" stroke-width="2.200"/></svg></button>
  <button class="a" aria-label="Workspace options"><svg class="ar"><use href="#dn"/></svg></button>
  <button aria-label="Annotation monitor"><svg viewBox="0 0 16 16"><path d="M8 0v16M0 8h16" stroke="#e8e8e8" stroke-width="1.500"/></svg></button>
  <button class="gapped" aria-label="Units"><svg viewBox="0 0 16 16"><path d="M4 0h8v3H9v1h3v2H9v1h3v2H9v1h3v2H9v1h3v3H4z" fill="#e0e0e0"/></svg></button>
  <button class="txt units">Decimal</button>
  <button class="a" aria-label="Unit list"><svg class="ar"><use href="#dn"/></svg></button>
  <button aria-label="Quick properties"><svg viewBox="0 0 16 16"><path d="M3 1h11v14H3z" fill="none" stroke="#ddd" stroke-width="1.300"/><path d="M5 4h2M5 7h2M5 10h2M5 13h2M8 4h4M8 7h4M8 10h4M8 13h4" stroke="#ddd"/></svg></button>
  <button aria-label="Lock UI"><svg viewBox="0 0 16 16"><path d="M7 12H1V2h13v5" fill="none" stroke="#ddd" stroke-width="1.300"/><path d="M8 10h6v5H8z" fill="#ddd"/><path d="M13 10V8q0-1 1.500-1T16 8v2" fill="none" stroke="#ddd"/></svg></button>
  <button class="a" aria-label="Lock options"><svg class="ar"><use href="#dn"/></svg></button>
  <button aria-label="Isolate objects"><svg viewBox="0 0 16 16"><path d="M1 1h5v5H1zM5 15l3-5 3 5z" fill="none" stroke="#ddd" stroke-width="1.200"/><circle cx="12.500" cy="7" r="2.800" fill="none" stroke="#ddd" stroke-width="1.200"/></svg></button>
  <button class="on gapped" aria-label="Hardware acceleration"><svg viewBox="0 0 16 16"><circle cx="8" cy="8" r="7.300" fill="#8db9e2" stroke="#fff"/><path d="M5 11l7-7" stroke="#fff" stroke-width="2"/></svg></button>
  <button class="gapped" aria-label="Elevation"><svg viewBox="0 0 16 16"><path d="M1 8l7-3 7 3v2l-7 4-7-4z" fill="#d5d5d5"/><path d="M8 1l7 4-7 4-7-4z" fill="#5cb0ec"/><path d="M1 8l7 4 7-4" stroke="#39424f" fill="none"/></svg></button>
  <button class="txt elev">3.5000</button>
  <button class="gapped" aria-label="Clean screen"><svg viewBox="0 0 16 16"><path d="M.5 2.500h15v11H.5z" fill="none" stroke="#ddd" stroke-width="1.300"/><path d="M9 7l4-3M10 4h3v3M3 12l3-3M3 9v3h3" stroke="#ddd" fill="none"/></svg></button>
  <button aria-label="Customization"><svg viewBox="0 0 16 16"><path d="M0 2.500h16M0 8h16M0 13.500h16" stroke="#e6e6e6" stroke-width="1.600"/></svg></button>
</footer>
</div>

<div class="taskbar">
  <button class="start" aria-label="Start"><svg viewBox="0 0 16 16"><path d="M0 2l7-1v6.500H0zM8 1l8-1v7.500H8zM0 8.500h7V15l-7-1zM8 8.500h8V16l-8-1z" fill="#f4f4f4"/></svg></button>
  <div class="find"><svg viewBox="0 0 20 20"><circle cx="10" cy="10" r="8" fill="none" stroke="#161616" stroke-width="2.600"/></svg><input type="text" placeholder="Search for anything" aria-label="Search"><svg class="mic" viewBox="0 0 12 18"><path d="M4 1.500h4v9H4zM1 8v4q0 2 2 2h6q2 0 2-2V8M6 14v3M3 17h6" fill="none" stroke="#222"/></svg></div>
  <nav class="apps">
    <button aria-label="Task view"><svg viewBox="0 0 20 20"><path d="M2 3v3h11V3M2 17v-3h11v3M3 8h9v4H3z" fill="none" stroke="#e4e0dd" stroke-width="1.500"/><path d="M16.500 2v16M15 7h3v3h-3z" stroke="#e4e0dd" fill="#e4e0dd"/></svg></button>
    <button aria-label="Chrome"><svg viewBox="0 0 20 20"><path d="M10 10L1.300 5A10 10 0 0 1 18.700 5z" fill="#e34133"/><path d="M10 10l8.700-5A10 10 0 0 1 10 20z" fill="#fbc116"/><path d="M10 10v10A10 10 0 0 1 1.300 5z" fill="#2da94f"/><circle cx="10" cy="10" r="5" fill="#fff"/><circle cx="10" cy="10" r="4" fill="#4285f4"/></svg></button>
    <button aria-label="Remote Desktop"><svg viewBox="0 0 20 20"><path d="M7 0l13 3v12L7 10z" fill="#3fa4ec"/><path d="M8 1l11 3v9z" fill="#73c5fa"/><path d="M4 11l14 4-7 2-9-4zM0 16l6-2 8 3-6 2z" fill="#d5d8da"/></svg></button>
    <button aria-label="File Explorer"><svg viewBox="0 0 20 20"><path d="M1 1h8l2 2h8v16H1z" fill="#f3ca64"/><path d="M1 6h18v12H1z" fill="#fadf85"/><path d="M4 11h12v8h-3v-4H7v4H4z" fill="#3c9fc5"/></svg></button>
    <button aria-label="YouTube"><svg viewBox="0 0 20 20"><rect x="0" y="3" width="20" height="14" rx="3" fill="#f80018"/><path d="M8 7l6 3-6 3z" fill="#fff"/></svg></button>
    <button aria-label="Excel"><svg viewBox="0 0 22 20"><path d="M6 0h16v20H6z" fill="#21a366"/><path d="M14 0h8v7h-8z" fill="#33c481"/><path d="M6 10h16v10H6z" fill="#107c41"/><path d="M0 5h11v11H0z" fill="#0f6b3a"/><path d="M3 7l5 7M8 7l-5 7" stroke="#fff" stroke-width="1.600"/></svg></button>
    <button aria-label="Word"><svg viewBox="0 0 22 20"><path d="M5 0h17v20H5z" fill="#2b7cd3"/><path d="M5 0h17v5H5z" fill="#41a5ee"/><path d="M5 13h17v7H5z" fill="#103f91"/><path d="M0 5h11v11H0z" fill="#1f5bbe"/><path d="M2 7l2 7 1.500-5L7 14l2-7" stroke="#fff" stroke-width="1.300" fill="none"/></svg></button>
    <button class="on run" aria-label="Civil 3D"><svg viewBox="0 0 22 22"><path d="M0 0h22v22H0z" fill="#e6f1f7"/><path d="M16 5q-2-2-5-1.500Q7 5 7 10t5 5.500q3 0 5-1.500" fill="none" stroke="#2f87bd" stroke-width="3.500"/><path d="M13 19.500h6" stroke="#2b5d85" stroke-width="2" stroke-dasharray="2 1"/></svg></button>
    <button class="run" aria-label="Filmora"><svg viewBox="0 0 22 22"><path d="M0 0h22v22H0z" fill="#343c41"/><path d="M9 3l4 4-4 4-4-4z" fill="#fff"/><path d="M13 7l5 4-8 8-4-4z" fill="#4cdcc0"/></svg></button>
  </nav>
  <div class="tray">
    <button aria-label="People"><svg viewBox="0 0 16 16"><circle cx="5" cy="6" r="2.300" fill="none" stroke="#eee"/><circle cx="11" cy="4" r="3" fill="none" stroke="#eee"/><path d="M1 15q0-5 4-5t4 4M8 9q6-2 7 3" fill="none" stroke="#eee"/></svg></button>
    <button class="n" aria-label="Hidden icons"><svg viewBox="0 0 16 16"><path d="M2 11l6-6 6 6" fill="none" stroke="#eee" stroke-width="1.300"/></svg></button>
    <button class="n" aria-label="Network"><svg viewBox="0 0 16 16"><path d="M3 15Q3 4 15 4M6 15q0-8 9-8M9 15q0-5 6-5M1 12Q4 2 13 2" fill="none" stroke="#ddd" stroke-width="1.200"/><circle cx="13" cy="13" r="2" fill="#eee"/></svg></button>
    <button class="n" aria-label="Battery"><svg viewBox="0 0 16 16"><path d="M1 4h12v8H1zM13 6h2v4h-2M5 1v3" fill="none" stroke="#eee" stroke-width="1.300"/><path d="M3 6h4v4H3z" fill="#eee"/></svg></button>
    <button class="n" aria-label="Volume"><svg viewBox="0 0 16 16"><path d="M1 6h2l4-4v12L3 10H1zM9 5q2 3 0 6M11 3.500q3 4.500 0 9M13 2q4 6 0 12" fill="none" stroke="#eee" stroke-width="1.200"/></svg></button>
    <button class="lang">ENG</button>
    <button class="clock">11:40 AM<br>24/06/2020</button>
    <button class="note" aria-label="Notifications"><svg viewBox="0 0 16 16"><path d="M0 1h16v11H9l-4 4v-4H0z" fill="#f2f2f2"/><path d="M3 4h10M3 7h10M3 9.500h6" stroke="#322"/><circle cx="13" cy="12" r="3" fill="#f2f2f2" stroke="#322"/></svg></button>
  </div>
</div>
</body>
</html>
```
FILE: styles.css
```css
* { box-sizing: border-box; }
html, body { height: 100%; }
body { margin: 0; display: flex; flex-direction: column; background: #000; color: #dfe2e7; font: 11px/14px "Open Sans", "Noto Sans", sans-serif; overflow: hidden; }
.defs { position: absolute; width: 0; height: 0; }
button, input, select { font: inherit; color: inherit; margin: 0; padding: 0; border: 0; background: none; min-width: 0; }
button { display: flex; align-items: center; justify-content: center; white-space: nowrap; }
svg { flex: none; display: block; }
svg.ar { width: 7px; height: 4px; }
.app { flex: 1; min-height: 0; margin: 0 4px; display: flex; flex-direction: column; background: #222933; }

.top { display: flex; border-bottom: 1px solid #414955; height: 46px; }
.logo { position: relative; width: 38px; height: 38px; margin-top: 4px; background: linear-gradient(#c5c8ca, #858a8f); border: 1px solid #9a9da0; align-items: flex-end; }
.logo svg { position: absolute; inset: 0; width: 36px; height: 36px; }
.logo span { position: relative; color: #111; font-size: 8px; line-height: 10px; font-weight: 700; }
.bars { flex: 1; display: flex; flex-direction: column; }
.titlebar { height: 28px; display: flex; align-items: center; }
.qat { display: flex; padding-left: 5px; width: 240px; }
.qat button { width: 22px; height: 22px; }
.qat svg { width: 16px; height: 16px; }
.qat .thin { width: 14px; }
.qat .cz { width: 9px; height: 9px; }
.qat svg.ar { width: 7px; height: 4px; }
.title { flex: 1; display: flex; gap: 12px; color: #e4e6ea; white-space: nowrap; justify-content: center; }
.info { display: flex; align-items: center; flex: none; width: 540px; }
.tri { width: 6px; height: 10px; margin-right: 6px; }
.search { width: 166px; height: 19px; background: #454d60; padding: 0 3px; font-style: italic; margin-right: 4px; }
.search::placeholder { color: #a9afbb; opacity: 1; }
.info button { height: 20px; width: 21px; }
.info button svg { width: 16px; height: 16px; }
.info .thin { width: 16px; }
.info .thin svg { width: 7px; height: 4px; }
.info .sign { width: 97px; justify-content: flex-start; gap: 4px; padding-left: 3px; }
.vsep { width: 1px; height: 16px; background: #4a515d; margin: 0 4px; }
.win { display: flex; margin-left: auto; }
.win button { width: 24px; }
.win button svg, .docwin svg { width: 12px; height: 12px; }
.menubar { display: flex; justify-content: space-between; height: 16px; color: #b2b7c0; }
.menubar nav { display: flex; gap: 21px; padding-left: 13px; }
.docwin { display: flex; }
.docwin button { width: 15px; }

.rtabs { display: flex; height: 20px; padding: 1px 0 0 3px; color: #b4b9c2; }
.rtabs button { padding: 0 9px 0 8px; }
.rtabs .on { background: #3b4453; color: #fff; padding: 0 9px; }
.rtabs .fold { padding-left: 20px; }
.fold svg { width: 24px; height: 8px; }

.ribbon { display: flex; background: #3b4453; height: 91px; }
.panel { display: flex; flex-direction: column; border-right: 1px solid #262d38; }
.draw { width: 211px; }
.modify { width: 125px; }
.anno { width: 139px; }
.layers { width: 256px; }
.block { width: 75px; }
.props { width: 208px; }
.groups { width: 65px; }
.body { flex: 1; display: flex; padding-top: 4px; justify-content: space-between; }
.ptitle { height: 18px; width: 100%; gap: 5px; }
.ptitle svg.ar, .collapsed svg.ar { width: 8px; height: 5px; }
.pfoot { display: flex; }
.launch { width: 14px; margin-left: -14px; }
.launch svg { width: 6px; height: 6px; }
.big { flex-direction: column; justify-content: flex-start; padding-top: 1px; width: 44px; }
.big svg { width: 30px; height: 30px; margin-bottom: 4px; }
.big svg.ar { width: 7px; height: 4px; margin: 1px 0; }
.small { display: grid; grid-auto-rows: 22px; align-items: center; justify-items: center; align-content: start; }
.small button { width: 20px; height: 20px; }
.small svg { width: 15px; height: 15px; }
.small svg.ar { width: 7px; height: 4px; }
.two { grid-template-columns: 22px 14px; }
.five { flex: 1; grid-template-columns: 28px 27px 28px 8px 1fr; }
.one { grid-template-columns: 26px; }
.draw .two { width: 39px; }
.draw .big:nth-child(1) { width: 42px; }
.draw .big:nth-child(2) { width: 40px; }
.draw .big:nth-child(3) { width: 50px; }
.draw .big:nth-child(4) { width: 36px; }
.anno .big:nth-child(2) { width: 56px; }
.layers .big, .props .big { width: 58px; }
.layers .body { justify-content: flex-start; }
.laycol { flex: 1; padding-right: 2px; }
.combo { position: relative; display: flex; align-items: center; background: #4a5568; border: 1px solid #2c3440; height: 20px; }
.combo select { appearance: none; width: 100%; height: 100%; padding-left: 4px; outline: 0; }
.combo > svg.ar { position: absolute; right: 3px; width: 8px; height: 5px; pointer-events: none; }
.layersel select { padding-left: 76px; }
.over { position: absolute; left: 3px; top: 1px; width: 68px; height: 16px; pointer-events: none; }
.laygrid { display: grid; grid-template-columns: repeat(5, 22px); grid-auto-rows: 22px; padding-top: 2px; }
.laygrid svg { width: 16px; height: 16px; }
.block .big { width: 40px; }
.block .two { grid-template-columns: 20px 14px; }
.proprows { flex: 1; display: grid; grid-template-columns: 22px 1fr; grid-auto-rows: 22px; padding: 0 2px 0 0; }
.pi svg { width: 16px; height: 16px; }
.combo .c1 { padding-left: 32px; }
.combo .c2 { padding-left: 62px; }
.swatch { position: absolute; left: 9px; width: 15px; height: 15px; background: #fff; }
.rule { position: absolute; left: 3px; width: 58px; height: 1px; background: #e4e6e9; }
.groups .big { width: 38px; }
.small .picked { background: #315575; border: 1px solid #6db4e8; width: 22px; }
.collapsed { width: 55px; margin-right: 2px; background: #4b566a; border: 1px solid #2f3743; border-top: 0; flex-direction: column; justify-content: flex-start; padding-top: 4px; height: 90px; }
.collapsed svg { width: 30px; height: 30px; margin-bottom: 4px; }
.collapsed svg.ar { margin: auto 0 4px; }

.doctabs { display: flex; height: 29px; padding: 5px 0 0 16px; border-bottom: 4px solid #3b4453; color: #b4b9c2; }
.doctabs button { width: 118px; background: #2c333f; justify-content: flex-start; padding-left: 14px; border-radius: 8px 8px 0 0; clip-path: polygon(6% 0, 94% 0, 100% 100%, 0 100%); }
.doctabs button.on { width: 122px; background: #3b4453; color: #fff; padding: 0 17px 0 11px; justify-content: space-between; clip-path: polygon(3% 0, 93% 0, 100% 100%, 0 100%); }
.doctabs svg { width: 9px; height: 9px; }
.doctabs .add { width: 22px; padding: 0; margin: 2px 0 2px 1px; justify-content: center; border-radius: 6px; clip-path: none; }

.work { flex: 1; min-height: 0; display: flex; background: #3b4453; }
.pane { width: 219px; display: flex; flex-direction: column; padding-bottom: 15px; }
.pane h2 { display: flex; align-items: center; gap: 5px; margin: 0 0 7px; height: 20px; padding-left: 5px; background: #2f3643; font: inherit; color: #fff; }
.pane h2 svg { width: 4px; height: 10px; }
.maprow { display: flex; align-items: center; padding: 0 12px 0 11px; gap: 3px; }
.maprow .combo { flex: 1; height: 18px; }
.maprow select { padding-left: 2px; }
.tools { display: flex; height: 52px; margin: 9px 11px 9px 10px; border: 1px solid #2d3541; }
.tools button { flex-direction: column; width: 31px; padding-top: 5px; gap: 1px; color: #dfe2e7; }
.tools button:disabled { color: #727986; }
.tools svg { width: 24px; height: 24px; }
.modes { display: flex; padding-left: 10px; height: 26px; }
.modes button { gap: 3px; padding: 0 2px; }
.modes .on { background: #232a34; margin-right: 6px; }
.modes button + button { border-left: 1px solid #667080; padding-left: 6px; }
.modes svg { width: 17px; height: 17px; }
.tree { flex: 1; min-height: 0; margin: 7px 11px 0 10px; border: 1px solid #75808f; padding: 3px 3px 5px; }
.leafs { height: 100%; background: #f4f4f4; color: #333; padding-top: 2px; }
.row { display: flex; align-items: center; height: 25px; padding-left: 10px; }
.row.sub { padding-left: 51px; }
.chev { width: 14px; height: 10px; margin-right: 7px; }
.row input { appearance: none; width: 13px; height: 13px; border: 1px solid #666; background: #fff; border-radius: 1px; display: flex; justify-content: center; }
.row input:checked::after { content: ""; width: 4px; height: 8px; border: solid #666; border-width: 0 2px 2px 0; transform: rotate(40deg); }
.chip { width: 44px; height: 15px; margin: 0 11px 0 6px; background: #fff; display: flex; align-items: center; }
.chip.line::after { content: ""; height: 1px; flex: 1; margin: 0 3px; background: #ccc; }
.vtabs { width: 22px; padding-top: 21px; border-right: 3px solid #4a5362; }
.vtabs button { width: 19px; height: 100px; background: #2f3643; border: 1px solid #262d38; color: #b4b9c2; }
.vtabs .on { background: #3b4453; color: #fff; border-bottom: 0; height: 102px; }
.vtabs span { writing-mode: vertical-rl; transform: rotate(180deg); }

.canvas { flex: 1; position: relative; background: #212831; }
.sheetview { position: absolute; inset: 0; width: 100%; height: 100%; }
.vpc { position: absolute; left: 3px; top: 5px; color: #eee; }
.cube { position: absolute; right: 10px; top: 9px; width: 84px; }
.cube svg { width: 84px; height: 84px; }
.cube button { margin: 14px 0 0 17px; width: 45px; height: 16px; gap: 4px; background: #8b8f9c; border-radius: 4px; border: 1px solid #777b87; color: #e1e3ea; font-size: 10px; }
.cube button svg { width: 9px; height: 7px; }
.navbar { position: absolute; right: 3px; top: 148px; width: 30px; height: 199px; background: #5d636b; border-radius: 4px; }
.navbar svg { width: 30px; height: 198px; }
.cmd { position: absolute; left: 20%; right: 20%; bottom: 1px; height: 24px; display: flex; align-items: center; background: #2b323d; padding-left: 4px; }
.grip { width: 6px; height: 18px; }
.cmd button { width: 21px; }
.cmd button svg { width: 11px; height: 11px; }
.cmd button + button svg { width: 15px; height: 15px; }
.field { flex: 1; display: flex; align-items: center; height: 24px; background: #fff; padding-left: 4px; border-radius: 2px; color: #222; }
.field svg { width: 28px; height: 12px; }
.field svg.up { width: 8px; height: 5px; margin-right: 2px; }
.field input { flex: 1; outline: 0; }
.activate { position: absolute; left: 760px; bottom: -18px; color: rgba(150,155,160,.75); white-space: nowrap; }
.activate strong { display: block; font-weight: 400; font-size: 18px; line-height: 24px; }
.activate span { display: block; font-size: 13px; line-height: 18px; }

.laytabs { display: flex; height: 19px; padding: 0 0 2px 12px; border-top: 1px solid #3b4453; color: #b4b9c2; }
.laytabs button { padding: 0 9px; background: #2b323d; margin-right: 2px; border-radius: 0 0 7px 7px; }
.laytabs .on { background: #3b4453; color: #fff; font-weight: 700; }
.laytabs svg { width: 9px; height: 9px; }
.status { display: flex; height: 26px; padding: 2px 0; }
.status button, .coords { background: #353e4c; height: 22px; }
.coords { flex: 1; margin: 0 3px 0 73px; padding: 4px 4px 4px 0; text-align: right; white-space: nowrap; }
.status button { flex: none; width: 22px; margin-right: 1px; }
.status .a { width: 16px; margin-right: 0; }
.status svg { width: 16px; height: 16px; }
.status svg.ar { width: 8px; height: 5px; }
.status .on { background: #5f93c6; }
.status .model { width: 44px; margin-right: 5px; color: #fff; }
.status .scale { width: 69px; gap: 4px; }
.status .units { width: 54px; }
.status .elev { width: 44px; }
.status .gapped { margin-left: 3px; }

.taskbar { flex: none; display: flex; height: 38px; margin-top: 4px; background: linear-gradient(90deg, #170b06, #2f1608 30%, #321706 75%, #180d08); color: #f3f1ef; }
.start { width: 45px; }
.start svg { width: 16px; height: 16px; }
.find { width: 322px; display: flex; align-items: center; background: #f2f2f2; padding: 0 13px 0 8px; color: #333; }
.find svg { width: 22px; height: 22px; }
.find .mic { width: 12px; height: 18px; }
.find input { flex: 1; font-size: 13px; padding-left: 7px; }
.find input::placeholder { color: #484848; opacity: 1; }
.apps { display: flex; flex: 1; }
.apps button { width: 46px; border-bottom: 3px solid transparent; padding-top: 2px; }
.apps svg { width: 21px; height: 21px; }
.apps .on { background: #5b483d; }
.apps .run { border-bottom-color: #78add9; }
.tray { display: flex; }
.tray svg { width: 16px; height: 16px; }
.tray button { width: 34px; }
.tray .n { width: 22px; }
.tray .lang { width: 38px; }
.tray .clock { width: 76px; line-height: 17px; }
.tray .note { width: 32px; margin-right: 15px; }
```
